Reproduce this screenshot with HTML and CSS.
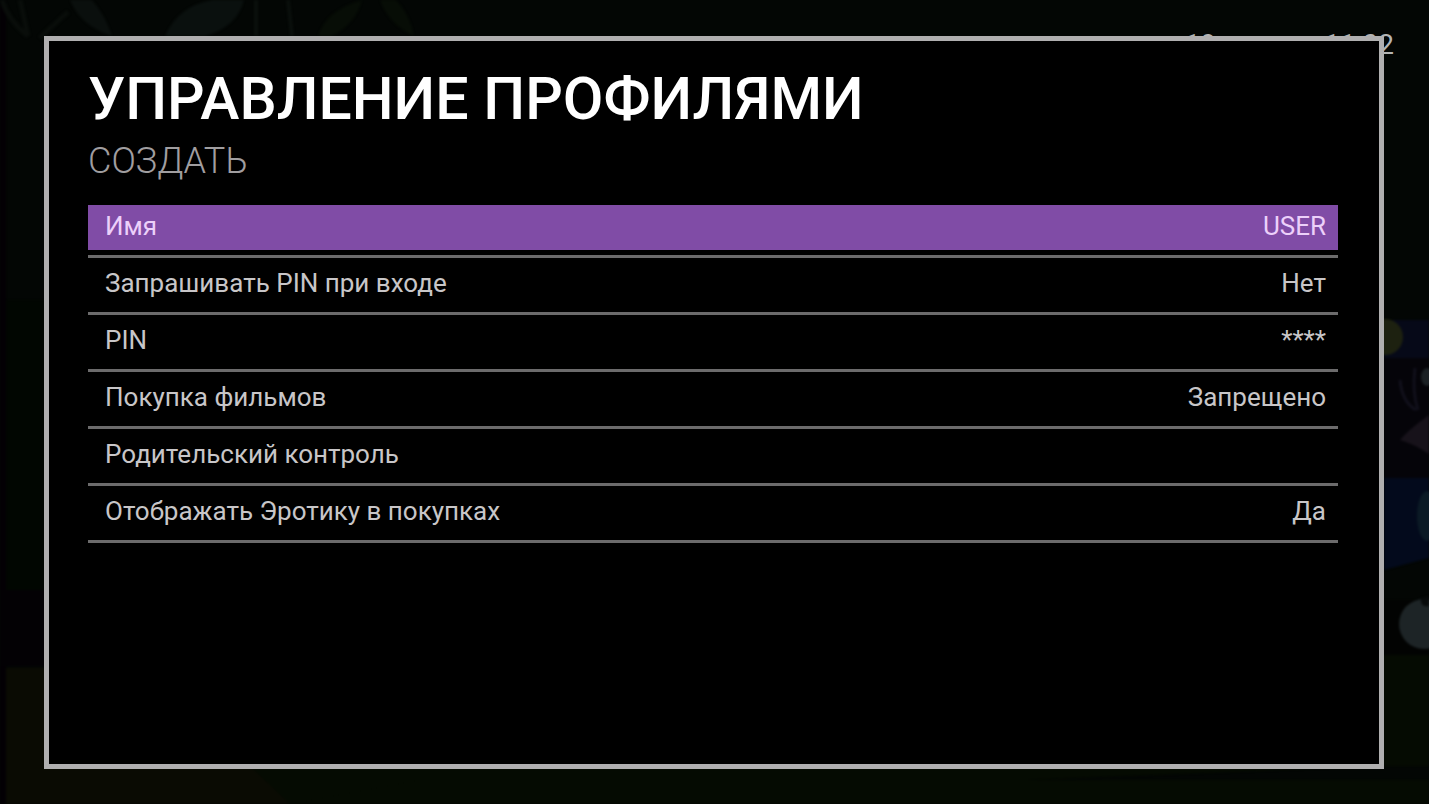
FILE: index.html
```html
<!DOCTYPE html>
<html lang="ru">
<head>
<meta charset="utf-8">
<title>Управление профилями</title>
<link rel="stylesheet" href="styles.css">
</head>
<body>
<svg class="backdrop" viewBox="0 0 1429 804" preserveAspectRatio="none" aria-hidden="true">
  <rect width="1429" height="804" fill="#030604"/>
  <g class="scene">
    <rect width="6" height="804" fill="#030004"/>
    <rect x="6" y="300" width="40" height="290" fill="#010601"/>
    <rect x="0" y="590" width="46" height="76" fill="#030104"/>
    <path d="M6 668H60V766H260L420 804H6Z" fill="#0a0b03"/>
    <path d="M250 766H1429V655H1380V766L420 804H290Z" fill="#050b02"/>
    <path d="M290 804L420 780H1429V804Z" fill="#050b02"/>
    <path d="M2 0Q8 20 28 36M20 0L28 36M68 12Q50 28 40 38" stroke="#090d0a" stroke-width="5" fill="none"/>
    <path d="M70 0Q80 26 112 36Q106 16 92 0Z" fill="#0a0f0d"/>
    <path d="M165 36Q178 6 212 0H244Q238 26 206 36Z" fill="#0a100e"/>
    <path d="M256 0V36M288 0L292 36" stroke="#0a0f0c" stroke-width="4"/>
    <path d="M318 36Q326 10 362 0Q356 24 332 36ZM380 0Q388 24 414 36Q410 14 396 0Z" fill="#070d06"/>
    <rect x="1384" y="320" width="45" height="38" fill="#060918"/>
    <circle cx="1385" cy="337" r="18" fill="#1d2110"/>
    <rect x="1384" y="358" width="45" height="120" fill="#050409"/>
    <path d="M1400 380Q1402 402 1416 410M1415 368Q1412 392 1418 410" stroke="#11101b" stroke-width="3" fill="none"/>
    <path d="M1429 415Q1408 430 1400 440Q1414 444 1429 454Z" fill="#17121a"/>
    <ellipse cx="1427" cy="377" rx="6" ry="9" fill="#1b2024"/>
    <path d="M1384 478H1429V558L1384 570Z" fill="#030a1c"/>
    <ellipse cx="1427" cy="516" rx="10" ry="25" fill="#0b1a25"/>
    <path d="M1384 600H1429V655H1384Z" fill="#020302"/>
    <circle cx="1424" cy="624" r="25" fill="#1d2426"/>
    <path d="M1421 598Q1420 608 1429 606V596Z" fill="#080b0b"/>
  </g>
</svg>
<div class="clock"><span>19</span><time>11:02</time></div>
<main class="panel">
  <h1 class="title">УПРАВЛЕНИЕ ПРОФИЛЯМИ</h1>
  <h2 class="subtitle">СОЗДАТЬ</h2>
  <ul class="options">
    <li class="option"><button class="row row-active" type="button"><span>Имя</span><span>USER</span></button></li>
    <li class="option"><button class="row" type="button"><span>Запрашивать PIN при входе</span><span>Нет</span></button></li>
    <li class="option"><button class="row" type="button"><span>PIN</span><span>****</span></button></li>
    <li class="option"><button class="row" type="button"><span>Покупка фильмов</span><span>Запрещено</span></button></li>
    <li class="option"><button class="row" type="button"><span>Родительский контроль</span></button></li>
    <li class="option"><button class="row" type="button"><span>Отображать Эротику в покупках</span><span>Да</span></button></li>
  </ul>
</main>
</body>
</html>
```
FILE: styles.css
```css
* {
  box-sizing: border-box;
}

body {
  margin: 0;
  min-height: 100vh;
  padding: 36px 45px 35px 44px;
  display: flex;
  background: #030604;
  color: #c8c6c8;
  font-family: Roboto, "Liberation Sans", sans-serif;
}

.backdrop {
  position: absolute;
  inset: 0;
  width: 100%;
  height: 100%;
}

.scene {
  filter: blur(1px);
}

.clock {
  position: absolute;
  top: 29px;
  right: 35px;
  display: flex;
  gap: 108px;
  font-size: 28px;
  line-height: 32px;
  color: #b4b4b4;
}

.panel {
  position: relative;
  flex: 1;
  padding: 28px 41px 40px 39px;
  border: 5px solid #b0afb0;
  background: #000;
}

.title {
  margin: 0;
  font-size: 59px;
  line-height: 60px;
  font-weight: 500;
  color: #fff;
}

.subtitle {
  margin: 8px 0 16px;
  font-size: 36px;
  line-height: 48px;
  font-weight: 300;
  color: #a09ea0;
}

.options {
  margin: 0;
  padding: 0;
  list-style: none;
}

.option {
  padding: 4px 0 5px;
  border-bottom: 3px solid #6c6b6c;
}

.row {
  display: flex;
  justify-content: space-between;
  align-items: flex-start;
  width: 100%;
  height: 45px;
  padding: 5px 12px 8px 17px;
  border: 0;
  background: none;
  color: inherit;
  font-family: inherit;
  font-size: 26px;
  line-height: 32px;
  text-align: left;
}

.row-active {
  background: #804ca6;
  color: #ecd0fa;
}
```
